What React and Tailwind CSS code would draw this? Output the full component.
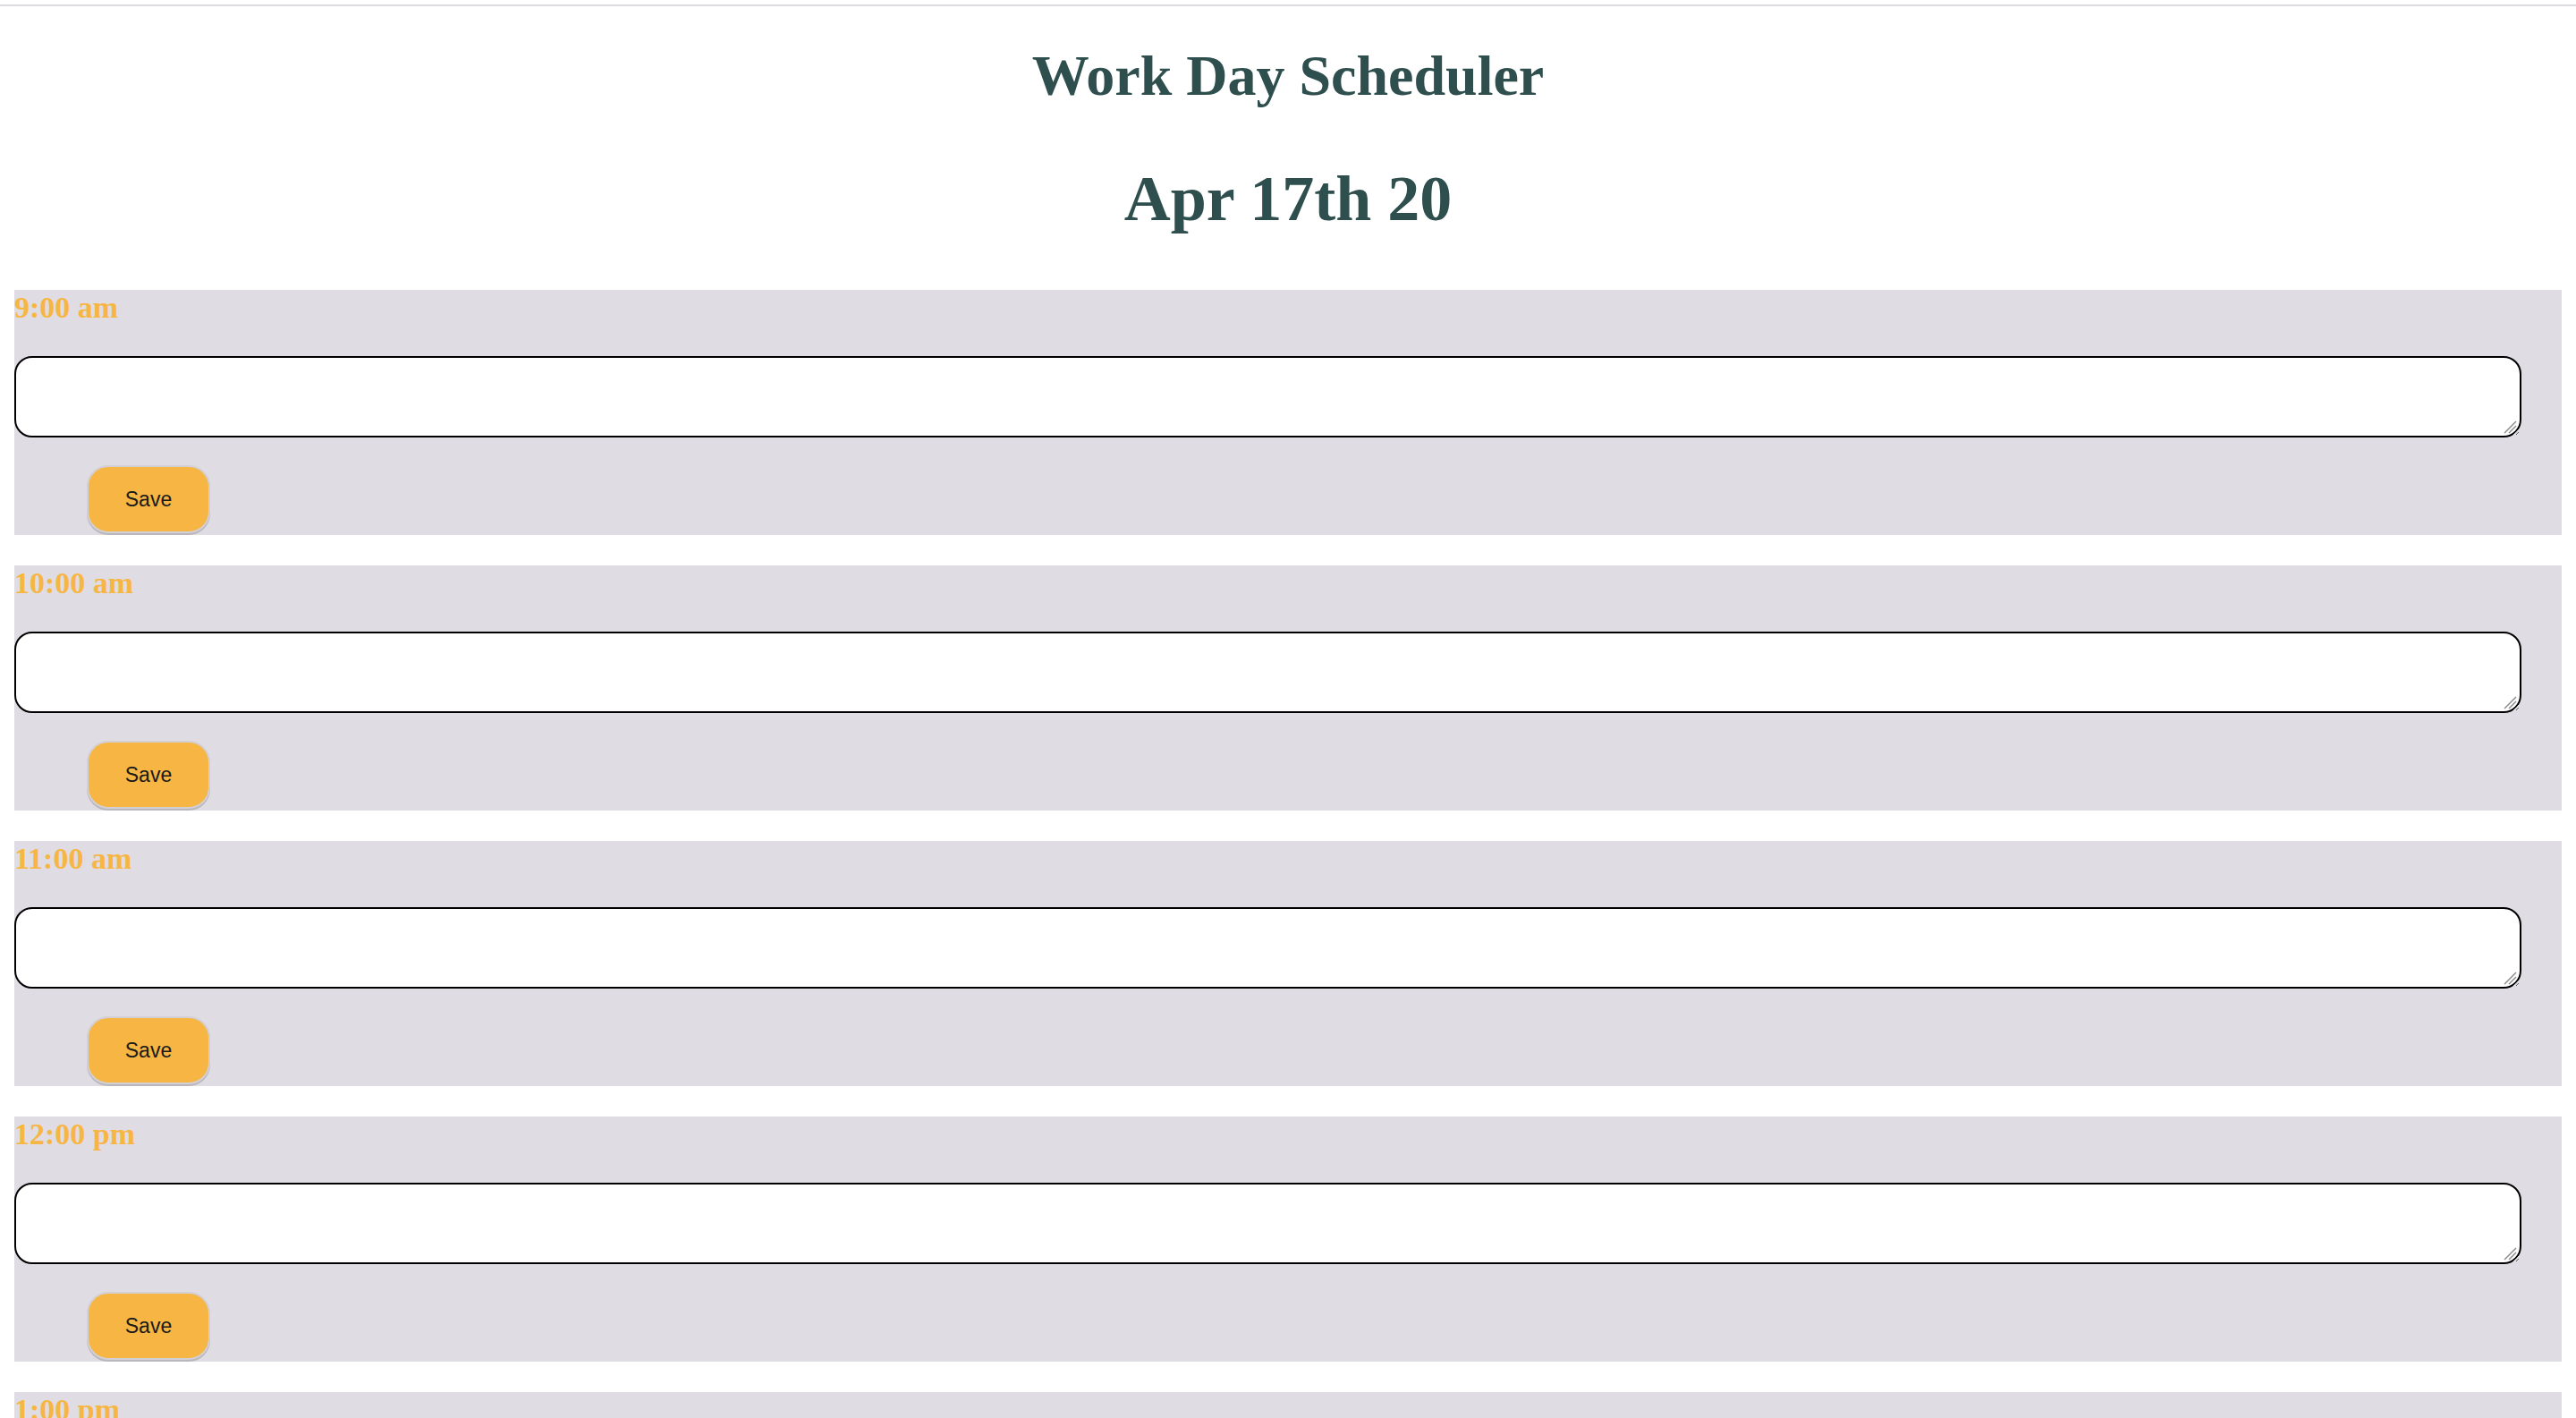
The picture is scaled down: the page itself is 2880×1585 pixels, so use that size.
import React from 'react';

const hours = ['9:00 am', '10:00 am', '11:00 am', '12:00 pm', '1:00 pm', '2:00 pm', '3:00 pm', '4:00 pm', '5:00 pm'];

const TimeBlock = ({ hour }) => {
  return (
    <div className="mx-[16px] mb-[34px] bg-[#dfdce3] pb-[2px]">
      <div className="h-[40px] text-[34px] leading-[40px] font-bold text-[#f7b643] [font-family:'Liberation_Serif',serif]">
        {hour}
      </div>
      <div className="relative mt-[34px] w-[2803px]">
        <textarea className="block h-[91px] w-full resize-y rounded-[20px] border-2 border-black bg-white" />
        {/* resize grip */}
        <svg className="pointer-events-none absolute right-[5px] bottom-[4px]" width="16" height="16" viewBox="0 0 16 16">
          <path d="M2 15 L15 2" stroke="#8a8a8a" strokeWidth="1.5" />
          <path d="M7 15 L15 7" stroke="#8a8a8a" strokeWidth="1.5" />
        </svg>
      </div>
      <button className="mt-[31px] ml-[81px] block h-[76px] w-[138px] rounded-[24px] border-2 border-[#d2d0d4] bg-[#f7b643] text-[23px] text-[#1a1a1a] shadow-[0_2px_0_#b9b7bc] [font-family:'Liberation_Sans',Arial,sans-serif]">
        Save
      </button>
    </div>
  );
};

export default function App() {
  return (
    <div className="min-h-screen bg-white">
      <div className="h-[5px]" />
      <div className="h-[2px] bg-[#dcdbe0]" />
      <header className="text-center font-bold text-[#2f4f4f] [font-family:'Liberation_Serif',serif]">
        <h1 className="mt-[46px] text-[64px] leading-[64px]">Work Day Scheduler</h1>
        <p className="mt-[69px] text-[72px] leading-[72px]">Apr 17th 20</p>
      </header>
      <div className="mt-[66px]">
        {hours.map((h) => (
          <TimeBlock key={h} hour={h} />
        ))}
      </div>
    </div>
  );
}
